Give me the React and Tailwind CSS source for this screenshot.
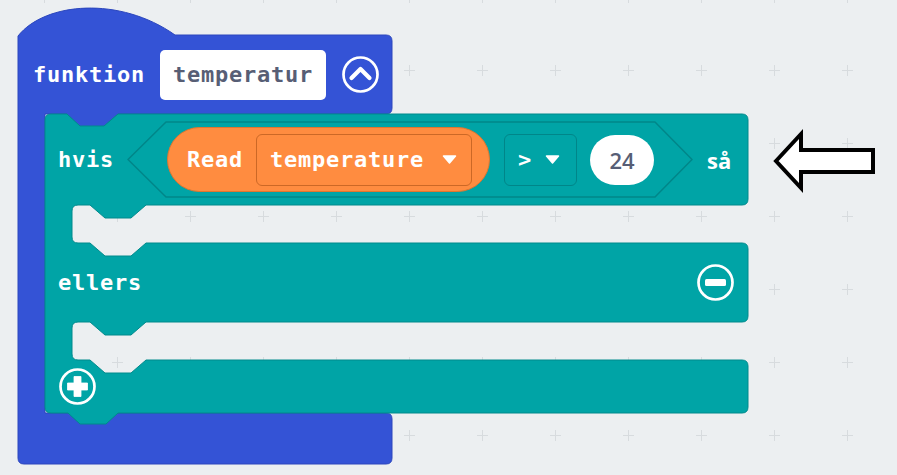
const mono =
  "font-['DejaVu_Sans_Mono',monospace] font-bold text-[22px] leading-none tracking-[0.75px]";

const GridMarks = () => {
  const xs = Array.from({ length: 13 }, (_, i) => 44 + i * 73);
  const ys = Array.from({ length: 8 }, (_, i) => -3 + i * 73);
  return (
    <svg className="absolute inset-0" width="897" height="475">
      {ys.map((y) =>
        xs.map((x) => (
          <path
            key={`${x}-${y}`}
            d={`M${x - 5} ${y + 0.5}H${x + 6}M${x + 0.5} ${y - 5}V${y + 6}`}
            stroke="#d7dbde"
            strokeWidth="1"
          />
        ))
      )}
    </svg>
  );
};

// block outlines, drawn in page coordinates
const BlockShapes = () => (
  <svg className="absolute inset-0" width="897" height="475">
    <path
      d="M18,36 C45,2 120,-4 175,35 L386,35 Q392,35 392,41 L392,108 Q392,114 386,114 L118,114 L104,127 L80,127 L67,114 L45,114 L45,413 L386,413 Q392,413 392,419 L392,458 Q392,464 386,464 L24,464 Q18,464 18,458 Z"
      fill="#3453d6"
      stroke="#2c47bd"
      strokeWidth="1"
    />
    <path
      d="M45,120 Q45,114 51,114 L67,114 L80,126 L104,126 L118,114 L742,114 Q748,114 748,120 L748,199 Q748,205 742,205
         L146,205 L131,218 L105,218 L90,205 L78,205 Q72,205 72,211 L72,237 Q72,243 78,243 L90,243 L105,256 L131,256 L146,243
         L742,243 Q748,243 748,249 L748,316 Q748,322 742,322
         L146,322 L131,335 L105,335 L90,322 L78,322 Q72,322 72,328 L72,354 Q72,360 78,360 L90,360 L105,373 L131,373 L146,360
         L742,360 Q748,360 748,366 L748,407 Q748,413 742,413 L118,413 L106,424 L80,424 L68,413 L51,413 Q45,413 45,407 Z"
      fill="#00a4a6"
      stroke="#008a8c"
      strokeWidth="1"
    />
  </svg>
);

const RoundIcon = ({ children }) => (
  <svg width="37" height="37" viewBox="0 0 37 37" className="shrink-0">
    <circle cx="18.5" cy="18.5" r="17" fill="none" stroke="white" strokeWidth="2.7" />
    {children}
  </svg>
);

const Caret = () => (
  <svg width="15" height="9" viewBox="0 0 15 9" className="shrink-0">
    <path d="M1.5 1 H13.5 L7.5 8 Z" fill="white" stroke="white" strokeWidth="1.5" strokeLinejoin="round" />
  </svg>
);

export default function App() {
  return (
    <div className="relative w-[897px] h-[475px] overflow-hidden bg-[#eceff1]">
      <GridMarks />
      <BlockShapes />

      <div className="absolute left-[18px] top-0 flex flex-col">
        <div className="h-[35px]" />

        {/* funktion row */}
        <div className="h-[79px] w-[374px] flex items-center pl-[15px]">
          <span className={`${mono} text-white w-[113px]`}>funktion</span>
          <div className="ml-[14px] w-[166px] h-[50px] rounded-[5px] bg-white flex items-center pl-[13px]">
            <span className={`${mono} text-[#575e75]`}>temperatur</span>
          </div>
          <div className="ml-[16px]">
            <RoundIcon>
              <path d="M9.5 22 L18.5 13 L27.5 22" fill="none" stroke="white" strokeWidth="4.2" strokeLinecap="round" strokeLinejoin="round" />
            </RoundIcon>
          </div>
        </div>

        <div className="ml-[27px] w-[703px] flex flex-col">
          {/* hvis row */}
          <div className="h-[91px] flex items-center pl-[13px]">
            <span className={`${mono} text-white w-[56px]`}>hvis</span>
            <div className="relative ml-[13px] w-[566px] h-[77px] flex items-center pl-[40px]">
              <svg className="absolute inset-0" width="566" height="77">
                <polygon
                  points="1,38.5 39,1 528,1 565,38.5 528,76 39,76"
                  fill="#00a4a6"
                  stroke="#008689"
                  strokeWidth="1.5"
                  strokeLinejoin="round"
                />
              </svg>
              <div className="relative w-[323px] h-[65px] rounded-full bg-[#ff8c40] border border-[#e0762f] flex items-center pl-[19px]">
                <span className={`${mono} text-white w-[56px]`}>Read</span>
                <div className="ml-[13px] w-[216px] h-[52px] rounded-[6px] border border-[#cc6826] flex items-center pl-[13px]">
                  <span className={`${mono} text-white w-[154px]`}>temperature</span>
                  <div className="ml-[18px]">
                    <Caret />
                  </div>
                </div>
              </div>
              <div className="relative ml-[14px] w-[73px] h-[52px] rounded-[6px] border border-[#008689] flex items-center pl-[13px]">
                <span className={`${mono} text-white w-[14px]`}>&gt;</span>
                <div className="ml-[13px]">
                  <Caret />
                </div>
              </div>
              <div className="relative ml-[13px] w-[64px] h-[50px] rounded-full bg-white flex items-center justify-center">
                <span className="font-['Open_Sans',sans-serif] font-semibold text-[22px] leading-none text-[#575e75]">
                  24
                </span>
              </div>
            </div>
            <span className="ml-[14px] font-['Open_Sans',sans-serif] font-bold text-[22px] leading-none text-white">
              så
            </span>
          </div>

          <div className="h-[38px]" />

          {/* ellers row */}
          <div className="h-[79px] flex items-center justify-between pl-[13px] pr-[14px]">
            <span className={`${mono} text-white`}>ellers</span>
            <RoundIcon>
              <rect x="8" y="15" width="21" height="7" rx="1.5" fill="white" />
            </RoundIcon>
          </div>

          <div className="h-[38px]" />

          {/* add row */}
          <div className="h-[53px] flex items-center pl-[14px]">
            <RoundIcon>
              <path d="M15 8.5 H22 V15 H28.5 V22 H22 V28.5 H15 V22 H8.5 V15 H15 Z" fill="white" stroke="white" strokeWidth="0.8" strokeLinejoin="round" />
            </RoundIcon>
          </div>
        </div>

        <div className="h-[51px]" />
      </div>

      {/* pointer arrow */}
      <svg className="absolute left-[768px] top-[128px]" width="112" height="66" viewBox="0 0 112 66">
        <polygon
          points="8,33 33,6 33,22 105,22 105,44 33,44 33,60"
          fill="white"
          stroke="black"
          strokeWidth="4"
          strokeLinejoin="miter"
        />
      </svg>
    </div>
  );
}
